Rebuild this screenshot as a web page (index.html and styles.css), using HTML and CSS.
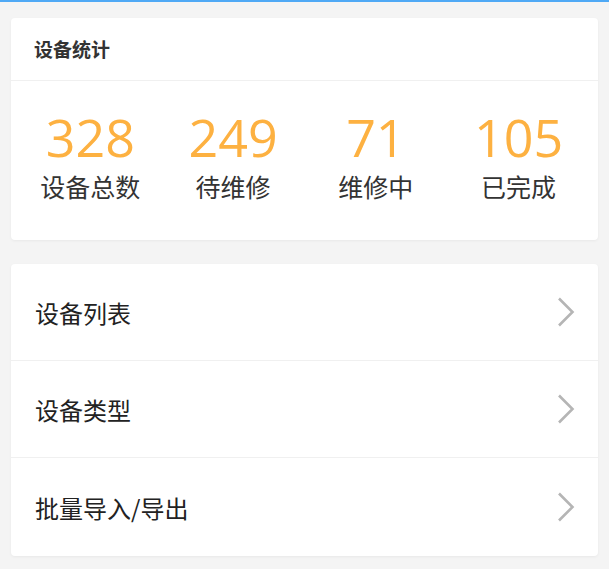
FILE: index.html
```html
<!DOCTYPE html>
<html lang="zh">
<head>
<meta charset="utf-8">
<link rel="stylesheet" href="styles.css">
</head>
<body>
<div class="topline"></div>
<main class="page">
  <section class="card stats">
    <div class="card-head">设备统计</div>
    <div class="stat-grid">
      <div class="stat"><div class="num">328</div><div class="label">设备总数</div></div>
      <div class="stat"><div class="num">249</div><div class="label">待维修</div></div>
      <div class="stat"><div class="num">71</div><div class="label">维修中</div></div>
      <div class="stat"><div class="num">105</div><div class="label">已完成</div></div>
    </div>
  </section>
  <section class="card menu">
    <a class="row"><span>设备列表</span><svg class="chev" viewBox="0 0 20 32" width="20" height="32"><path d="M3 2.5 L16.5 16 L3 29.5" fill="none" stroke="#b5b5b5" stroke-width="2.6"/></svg></a>
    <a class="row"><span>设备类型</span><svg class="chev" viewBox="0 0 20 32" width="20" height="32"><path d="M3 2.5 L16.5 16 L3 29.5" fill="none" stroke="#b5b5b5" stroke-width="2.6"/></svg></a>
    <a class="row"><span>批量导入/导出</span><svg class="chev" viewBox="0 0 20 32" width="20" height="32"><path d="M3 2.5 L16.5 16 L3 29.5" fill="none" stroke="#b5b5b5" stroke-width="2.6"/></svg></a>
  </section>
</main>
</body>
</html>
```
FILE: styles.css
```css
html, body { margin: 0; padding: 0; }
body {
  background: #f4f4f4;
  font-family: "Noto Sans CJK SC", "Noto Sans", sans-serif;
  width: 609px;
  height: 569px;
  overflow: hidden;
}
.topline { height: 2px; background: #4fa9f5; }
.page {
  padding: 16px 11px 0 11px;
  display: flex;
  flex-direction: column;
  gap: 24px;
}
.card {
  background: #fff;
  border-radius: 4px;
  box-shadow: 0 1px 3px rgba(0,0,0,0.05);
}
.card-head {
  height: 62px;
  line-height: 62px;
  padding-left: 23px;
  font-size: 19px;
  font-weight: 700;
  color: #333;
  border-bottom: 1px solid #f0f0f0;
}
.stat-grid {
  display: grid;
  grid-template-columns: repeat(4, 1fr);
  padding: 30px 8px 38px;
}
.stat { text-align: center; }
.num {
  font-family: "Open Sans", "Noto Sans", sans-serif;
  font-size: 52px;
  line-height: 52px;
  color: #fdb141;
}
.label {
  font-size: 25px;
  line-height: 32px;
  color: #333;
  margin-top: 7px;
}
.menu { display: flex; flex-direction: column; }
.row {
  display: flex;
  align-items: center;
  justify-content: space-between;
  height: 96px;
  padding: 0 22px 0 24px;
  border-bottom: 1px solid #f0f0f0;
  font-size: 24px;
  color: #222;
}
.row:last-child { border-bottom: none; height: 98px; }
.chev { display: block; }
```
